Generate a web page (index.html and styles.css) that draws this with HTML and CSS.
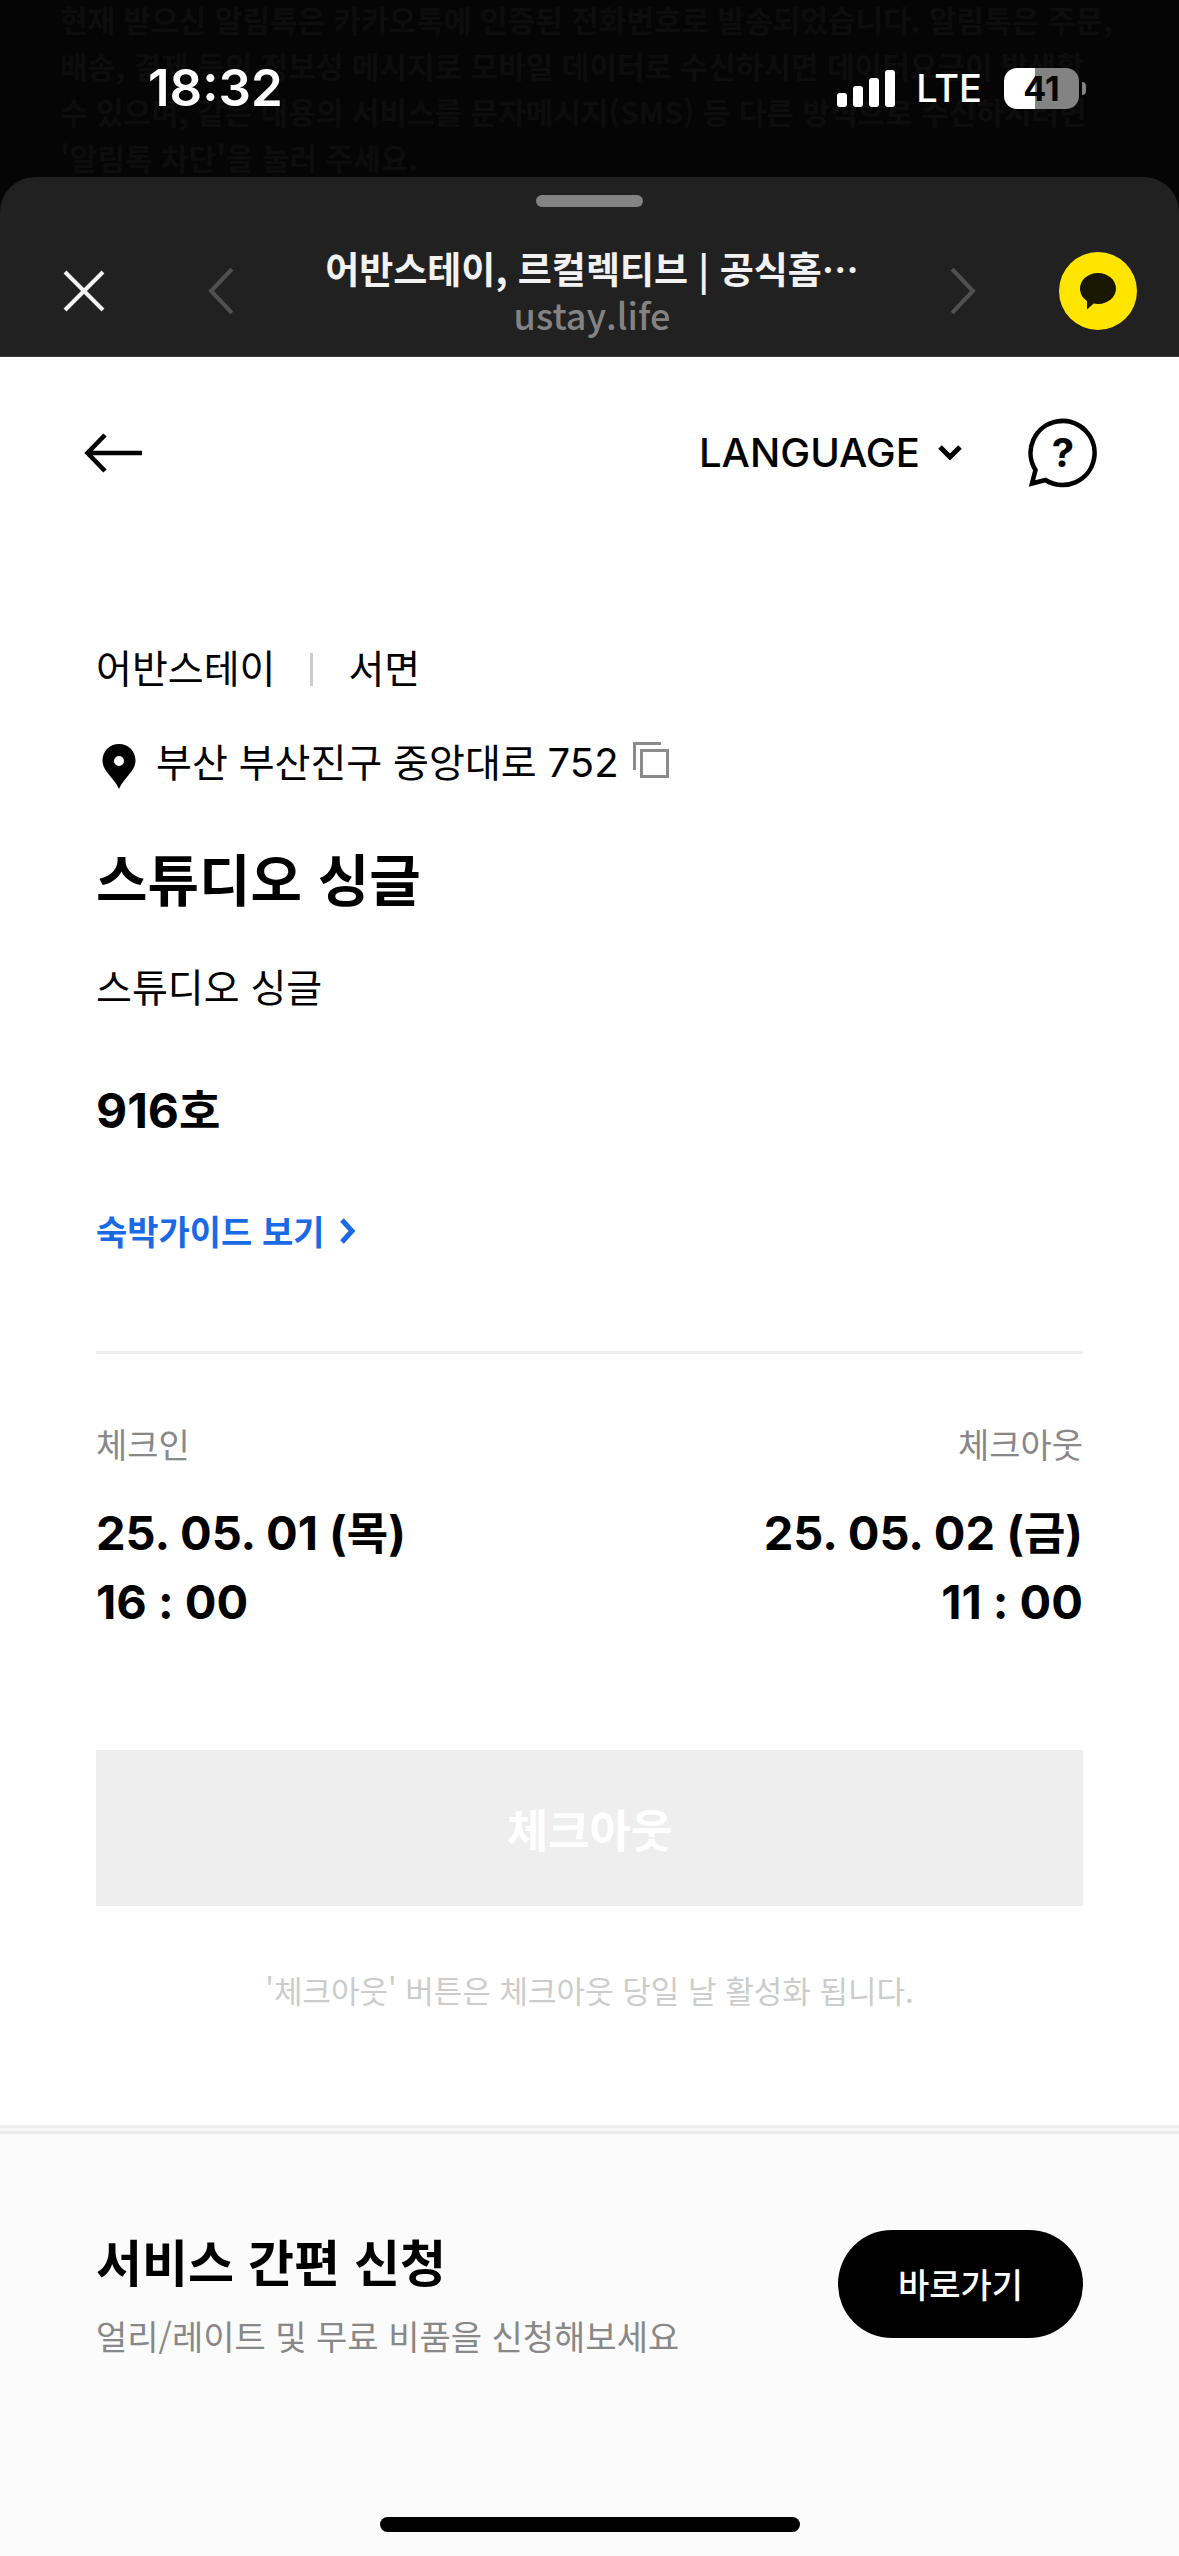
FILE: index.html
```html
<!DOCTYPE html>
<html lang="ko">
<head>
<meta charset="utf-8">
<meta name="viewport" content="width=device-width, initial-scale=1">
<title>어반스테이, 르컬렉티브 | 공식홈페이지</title>
<link rel="stylesheet" href="styles.css">
</head>
<body>
<div class="backdrop">
  <p class="backdrop-text" aria-hidden="true">현재 받으신 알림톡은 카카오톡에 인증된 전화번호로 발송되었습니다. 알림톡은 주문,<br>배송, 결제 등의 정보성 메시지로 모바일 데이터로 수신하시면 데이터요금이 발생할<br>수 있으며, 같은 내용의 서비스를 문자메시지(SMS) 등 다른 방식으로 수신하시려면<br>'알림톡 차단'을 눌러 주세요.</p>
  <div class="status-bar">
    <span class="clock">18:32</span>
    <div class="status-icons">
      <svg class="signal" width="58" height="37" viewBox="0 0 58 37" fill="#fff" aria-hidden="true">
        <rect x="0" y="23" width="10" height="14" rx="3"/><rect x="16" y="16" width="10" height="21" rx="3"/><rect x="32" y="8" width="10" height="29" rx="3"/><rect x="48" y="0" width="10" height="37" rx="3"/>
      </svg>
      <span class="network">LTE</span>
      <div class="battery"><span class="battery-body">41</span><span class="battery-tip"></span></div>
    </div>
  </div>
</div>

<header class="sheet-header">
  <div class="handle"></div>
  <div class="sheet-nav">
    <button class="icon-button" type="button" aria-label="닫기">
      <svg width="42" height="42" viewBox="0 0 42 42" fill="none" stroke="#f2f2f2" stroke-width="4" aria-hidden="true"><path d="M2 2 40 40M40 2 2 40"/></svg>
    </button>
    <button class="icon-button nav-back" type="button" aria-label="이전">
      <svg width="26" height="46" viewBox="0 0 26 46" fill="none" stroke="#505050" stroke-width="4" aria-hidden="true"><path d="M24 1 3 23l21 22"/></svg>
    </button>
    <div class="sheet-title">
      <strong>어반스테이, 르컬렉티브 | 공식홈⋯</strong>
      <span>ustay.life</span>
    </div>
    <button class="icon-button nav-forward" type="button" aria-label="다음">
      <svg width="26" height="46" viewBox="0 0 26 46" fill="none" stroke="#505050" stroke-width="4" aria-hidden="true"><path d="m2 1 21 22L2 45"/></svg>
    </button>
    <button class="icon-button talk-button" type="button" aria-label="카카오톡 공유">
      <svg width="36" height="37" viewBox="0 0 36 37" fill="#1a1700" aria-hidden="true"><path d="M18 0c10 0 18 7 18 15.500S28 31 18 31c-1.500 0-3 0-4.300-.4L7 36.500V28C2.800 25.200 0 20.700 0 15.500 0 7 8 0 18 0Z"/></svg>
    </button>
  </div>
</header>

<div class="page-header">
  <button class="icon-button" type="button" aria-label="뒤로">
    <svg width="58" height="40" viewBox="0 0 58 40" fill="none" stroke="#000" stroke-width="4.600" aria-hidden="true"><path d="M21 2 3.500 20 21 38M3 20h55"/></svg>
  </button>
  <div class="page-tools">
    <label class="language">
      <select class="language-select" aria-label="언어 선택"><option>LANGUAGE</option></select>
      <svg width="24" height="18" viewBox="0 0 24 18" fill="none" stroke="#000" stroke-width="5" aria-hidden="true"><path d="m2 3 10 10L22 3"/></svg>
    </label>
    <button class="icon-button" type="button" aria-label="도움말">
      <svg width="70" height="70" viewBox="0 0 70 70" fill="none" stroke="#000" stroke-width="4.600" aria-hidden="true"><path d="M7.500 52A32 32 0 1 1 17.500 62L4 65.500Z"/><text class="help-mark" x="35" y="49" text-anchor="middle">?</text></svg>
    </button>
  </div>
</div>

<main class="stay">
  <div class="branch"><span>어반스테이</span><span>서면</span></div>
  <div class="address">
    <svg class="pin" width="34" height="46" viewBox="0 0 34 46" aria-hidden="true"><path fill-rule="evenodd" d="M17 0c9.500 0 16.500 7.300 16.500 16.500C33.500 28 22 33 17 45 12 33 .5 28 .5 16.500.5 7.300 7.500 0 17 0Zm0 12a5 5 0 1 0 0 10 5 5 0 0 0 0-10Z"/></svg>
    <span>부산 부산진구 중앙대로 <span class="address-number">752</span></span>
    <button class="icon-button copy" type="button" aria-label="주소 복사">
      <svg width="36" height="36" viewBox="0 0 36 36" fill="none" stroke="#8b8b8b" stroke-width="3" aria-hidden="true"><path d="M28 1.500H1.500V28M8.500 8.500h26v26h-26Z"/></svg>
    </button>
  </div>
  <h1 class="room-title">스튜디오 싱글</h1>
  <p class="room-type">스튜디오 싱글</p>
  <p class="room-number">916<span class="hangul">호</span></p>
  <a class="guide-link" href="#guide">숙박가이드 보기
    <svg width="16" height="26" viewBox="0 0 16 26" fill="none" stroke="#1a69e5" stroke-width="5" aria-hidden="true"><path d="m2 2 10 11L2 24"/></svg>
  </a>
  <dl class="schedule">
    <div>
      <dt>체크인</dt>
      <dd>25. 05. 01 (<span class="hangul">목</span>)<br>16 : 00</dd>
    </div>
    <div class="schedule-out">
      <dt>체크아웃</dt>
      <dd>25. 05. 02 (<span class="hangul">금</span>)<br>11 : 00</dd>
    </div>
  </dl>
  <button class="checkout" type="button" disabled>체크아웃</button>
  <p class="note">'체크아웃' 버튼은 체크아웃 당일 날 활성화 됩니다.</p>
</main>

<footer class="service">
  <div class="service-row">
    <div>
      <h2>서비스 간편 신청</h2>
      <p>얼리/레이트 및 무료 비품을 신청해보세요</p>
    </div>
    <button class="go" type="button">바로가기</button>
  </div>
  <div class="home-indicator"></div>
</footer>
</body>
</html>
```
FILE: styles.css
```css
* {
  box-sizing: border-box;
}

body {
  --korean: "Noto Sans CJK KR", sans-serif;
  --latin: Inter, "Noto Sans CJK KR", sans-serif;
  display: flex;
  flex-direction: column;
  min-height: 100vh;
  margin: 0;
  background: #fff;
  color: #000;
  font-family: var(--korean);
}

h1, h2, p, dl, dd {
  margin: 0;
}

button, select {
  padding: 0;
  border: 0;
  background: none;
  color: inherit;
  font: inherit;
}

svg {
  display: block;
}

.icon-button {
  display: flex;
  flex: none;
  align-items: center;
  justify-content: center;
}

/* Dimmed chat behind the sheet */
.backdrop {
  position: relative;
  height: 212px;
  margin-bottom: -35px;
  overflow: hidden;
  background: #050505;
}

.backdrop-text {
  position: absolute;
  top: -4px;
  left: 60px;
  color: #0d0d0d;
  font-size: 30px;
  font-weight: 700;
  line-height: 46px;
  white-space: nowrap;
}

.status-bar {
  position: relative;
  display: flex;
  align-items: center;
  justify-content: space-between;
  padding: 56px 93px 0 148px;
  color: #fff;
  font-family: var(--latin);
}

.clock {
  font-size: 51px;
  font-weight: 600;
  line-height: 64px;
}

.status-icons {
  display: flex;
  align-items: center;
}

.network {
  margin: 0 22px 0 21px;
  font-size: 38px;
  font-weight: 500;
  line-height: 48px;
}

.battery {
  display: flex;
  align-items: center;
  gap: 3px;
}

.battery-body {
  width: 75px;
  border-radius: 13px;
  background: linear-gradient(90deg, #fff 31px, #838383 31px);
  color: #050505;
  font-size: 34px;
  font-weight: 700;
  line-height: 41px;
  text-align: center;
}

.battery-tip {
  width: 4px;
  height: 13px;
  border-radius: 0 4px 4px 0;
  background: #838383;
}

/* In-app browser bar */
.sheet-header {
  position: relative;
  padding: 18px 0 20px;
  border-bottom: 1px solid #3a3a3a;
  border-radius: 35px 35px 0 0;
  background: #212121;
}

.handle {
  width: 107px;
  height: 12px;
  margin: 0 auto 39px;
  border-radius: 6px;
  background: #838383;
}

.sheet-nav {
  display: flex;
  align-items: center;
  height: 90px;
  padding: 0 42px 0 63px;
}

.nav-back {
  margin-left: 103px;
}

.nav-forward {
  margin-right: 83px;
}

.sheet-title {
  display: flex;
  flex: 1;
  flex-direction: column;
  align-items: center;
  color: #f2f2f2;
  font-size: 37px;
  line-height: 46px;
  white-space: nowrap;
}

.sheet-title span {
  color: #838383;
  font-size: 36px;
  font-weight: 500;
}

.talk-button {
  width: 78px;
  height: 78px;
  border-radius: 50%;
  background: #fee500;
}

/* Site header */
.page-header {
  display: flex;
  align-items: center;
  justify-content: space-between;
  height: 192px;
  padding: 0 81px 0 84px;
}

.page-tools,
.language {
  display: flex;
  align-items: center;
}

.page-tools {
  gap: 66px;
}

.language {
  gap: 18px;
}

.language-select {
  appearance: none;
  font-family: var(--latin);
  font-size: 40px;
  font-weight: 500;
  line-height: 60px;
}

.help-mark {
  fill: #000;
  stroke: none;
  font-family: var(--latin);
  font-size: 40px;
  font-weight: 700;
}

/* Reservation */
.stay {
  padding: 87px 96px 111px;
  border-bottom: 3px solid #eee;
}

.branch,
.address,
.room-type {
  font-size: 39px;
  line-height: 60px;
}

.branch {
  display: flex;
  align-items: center;
}

.branch span + span::before {
  display: inline-block;
  width: 3px;
  height: 33px;
  margin: 0 35px;
  background: #ccc;
  content: "";
  vertical-align: -3px;
}

.address {
  display: flex;
  align-items: center;
  margin-top: 34px;
}

.pin {
  margin: 14px 20px 0 6px;
}

.address-number {
  font-family: var(--latin);
  font-size: 40px;
  line-height: 1;
}

.copy {
  margin-left: 14px;
}

.room-title {
  margin-top: 45px;
  font-size: 56px;
  line-height: 84px;
}

.room-type {
  margin-top: 36px;
}

.room-number {
  margin-top: 60px;
  font-family: var(--latin);
  font-size: 48px;
  font-weight: 700;
  line-height: 72px;
}

.hangul {
  font-family: var(--korean);
  font-size: 45px;
  line-height: 1;
}

.guide-link {
  display: flex;
  align-items: center;
  gap: 16px;
  margin-top: 60px;
  color: #1a69e5;
  font-size: 34px;
  font-weight: 700;
  line-height: 48px;
  text-decoration: none;
}

.schedule {
  display: flex;
  justify-content: space-between;
  margin-top: 96px;
  padding-top: 66px;
  border-top: 3px solid #eee;
}

.schedule-out {
  text-align: right;
}

.schedule dt {
  color: #888;
  font-size: 34px;
  line-height: 48px;
}

.schedule dd {
  margin-top: 30px;
  font-family: var(--latin);
  font-size: 47px;
  font-weight: 700;
  line-height: 69px;
}

.checkout {
  display: block;
  width: 100%;
  height: 156px;
  margin-top: 114px;
  background: #eee;
  color: #fff;
  font-size: 45px;
  font-weight: 700;
}

.note {
  margin-top: 60px;
  color: #ccc;
  font-size: 31px;
  line-height: 48px;
  text-align: center;
}

/* Service request bar */
.service {
  display: flex;
  flex: 1;
  flex-direction: column;
  margin-top: 3px;
  padding: 90px 96px 24px;
  border-top: 3px solid #ebebeb;
  background: #fbfbfc;
  box-shadow: 0 -3px #f8f8f8;
}

.service-row {
  display: flex;
  align-items: flex-start;
  justify-content: space-between;
}

.service h2 {
  font-size: 50px;
  line-height: 72px;
}

.service p {
  margin-top: 16px;
  color: #888;
  font-size: 34px;
  line-height: 48px;
}

.go {
  margin-top: 6px;
  padding: 0 60px;
  border-radius: 54px;
  background: #000;
  color: #fff;
  font-size: 34px;
  font-weight: 500;
  line-height: 108px;
}

.home-indicator {
  width: 420px;
  height: 15px;
  margin: auto auto 0;
  border-radius: 8px;
  background: #000;
}
```
